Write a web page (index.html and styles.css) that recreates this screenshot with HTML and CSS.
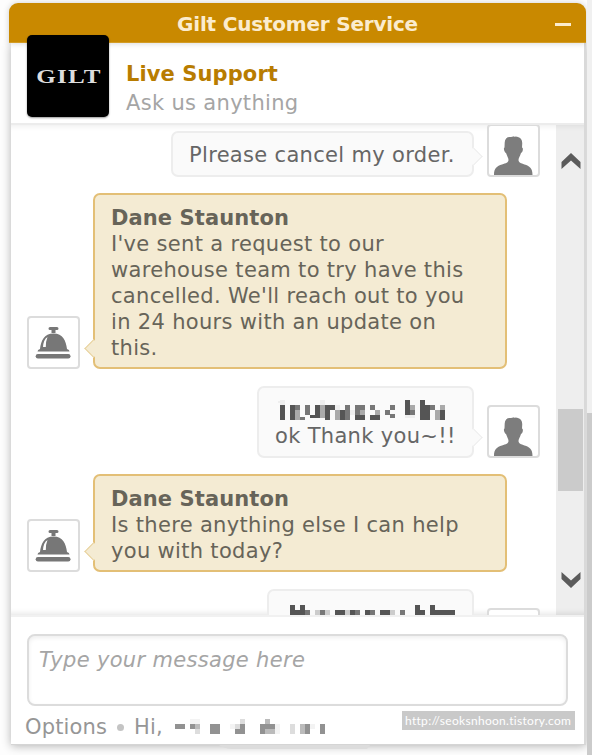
FILE: index.html
```
<!DOCTYPE html>
<html lang="en">

<head>
    <meta charset="UTF-8">
    <meta name="viewport" content="width=device-width, initial-scale=1.0">
    <title>Gilt Customer Service</title>
    <link rel="stylesheet" href="styles.css">
</head>

<body>

    <svg class="symbols">
        <symbol id="person" viewBox="0 0 49 49">
            <path d="M5 49c0-7 3-9 8-10.500c4-1.300 6.500-2 6.500-4.500c0-2-1.500-4-2.500-7c-1.500-.5-3-5-1.500-5.500l.2-5c.2-3.500 2-5.500 5-5.500c2-.2 3-.3 4.500-.8l.3.700l1-.4c5 .5 7 3 6.700 7.500l-.2 3.500c1.800.5.5 5-1 5.500c-1 3.500-2.500 5-2.500 7c0 2.500 2.500 3.200 6 4.500c5 1.500 8 3.500 8 10.500z" fill="#7d7d7d" />
        </symbol>
        <symbol id="bell" viewBox="0 0 49 49">
            <path d="M21 9h7q1.500 0 1.500 1.500t-1.500 1.500h-1.500v3h-4v-3h-1.500q-1.500 0-1.500-1.500t1.500-1.500z" fill="#777" />
            <path d="M8.500 33.500q0-2 2.500-2.500c1-8 4-15.500 13.500-15.500s12.500 7.500 13.500 15.500q2.500.5 2.500 2.500z" fill="#777" />
            <rect x="6.700" y="36" width="34.800" height="4.500" rx="2.200" fill="#777" />
            <path d="M14 29q.5-7.500 4.500-10q-1.700 4-1.700 10z" fill="#fff" />
        </symbol>
    </svg>

    <div class="chat">
        <div class="titleBar">
            <span class="title">Gilt Customer Service</span>
            <span class="minimize"></span>
        </div>
        <div class="panel">
            <div class="header">
                <div class="logo"><span>GILT</span></div>
                <div class="headerText">
                    <div class="headerTitle">Live Support</div>
                    <div class="headerSub">Ask us anything</div>
                </div>
            </div>

            <div class="messages">
                <div class="list">
                    <div class="row user">
                        <div class="bubble order">Plrease cancel my order.</div>
                        <div class="avatar"><svg><use href="#person" /></svg></div>
                    </div>
                    <div class="row agent">
                        <div class="avatar"><svg><use href="#bell" /></svg></div>
                        <div class="bubble">
                            <b>Dane Staunton</b><br>
                            I've sent a request to our<br>
                            warehouse team to try have this<br>
                            cancelled. We'll reach out to you<br>
                            in 24 hours with an update on<br>
                            this.
                        </div>
                    </div>
                    <div class="row user">
                        <div class="bubble thanks">
                            <svg class="hiddenName" width="180" height="26" shape-rendering="crispEdges">
                                <path d="M5 10h5v15h-5zM15 10h5v15h-5zM50 10h5v15h-5zM55 10h5v5h-5zM130 5h5v15h-5zM145 5h5v20h-5zM150 10h5v15h-5zM35 20h10v3h-10zM65 15h5v10h-5zM80 20h10v5h-10zM95 20h10v5h-10zM40 10h5v10h-5zM165 15h5v10h-5z" fill="#555" />
                                <path d="M20 10h5v5h-5zM30 10h5v10h-5zM70 10h5v15h-5zM80 10h10v10h-10zM95 10h5v5h-5zM110 15h5v5h-5zM115 10h5v5h-5zM115 19h5v4h-5zM135 15h5v5h-5zM155 10h5v5h-5zM25 22h5v3h-5z" fill="#777" />
                                <path d="M20 15h5v10h-5zM45 10h5v13h-5zM60 15h5v10h-5zM85 15h5v5h-5zM100 15h5v5h-5zM160 15h5v10h-5zM135 10h5v5h-5zM165 10h5v5h-5z" fill="#aaa" />
                                <path d="M3 6h2v2h-2zM60 10h5v5h-5zM75 15h5v5h-5zM130 20h10v3h-10zM5 5h5v5h-5zM45 5h5v5h-5z" fill="#eee" />
                            </svg>
                            ok Thank you~!!
                        </div>
                        <div class="avatar"><svg><use href="#person" /></svg></div>
                    </div>
                    <div class="row agent">
                        <div class="avatar"><svg><use href="#bell" /></svg></div>
                        <div class="bubble">
                            <b>Dane Staunton</b><br>
                            Is there anything else I can help<br>
                            you with today?
                        </div>
                    </div>
                    <div class="row user">
                        <div class="bubble last">
                            <svg class="hiddenName" width="180" height="26" shape-rendering="crispEdges">
                                <path d="M5 6h5v10h-5zM10 11h10v5h-10zM15 6h5v5h-5zM50 11h10v5h-10zM65 11h5v5h-5zM80 11h5v5h-5zM95 11h10v5h-10zM130 6h5v10h-5zM135 11h5v5h-5zM145 6h5v10h-5zM150 11h20v5h-20z" fill="#555" />
                                <path d="M20 11h5v5h-5zM35 11h5v5h-5zM70 11h5v5h-5zM85 11h5v5h-5zM115 11h5v5h-5z" fill="#777" />
                                <path d="M30 11h5v5h-5zM40 11h5v5h-5zM60 11h5v5h-5zM105 11h5v5h-5z" fill="#ccc" />
                            </svg>
                        </div>
                        <div class="avatar"></div>
                    </div>
                </div>
                <div class="scrollbar">
                    <svg width="20" height="17" viewBox="0 0 20 17"><path d="M0.500 17v-7l9.500-9l9.500 9v7l-9.500-8.500z" fill="#5b5b5b" /></svg>
                    <div class="thumb"></div>
                    <svg width="20" height="17" viewBox="0 0 20 17"><path d="M0.500 0v7l9.500 9l9.500-9v-7l-9.500 8.500z" fill="#5b5b5b" /></svg>
                </div>
            </div>

            <div class="footer">
                <div class="input">Type your message here</div>
                <div class="options">
                    <span>Options</span>
                    <span class="dot"></span>
                    <span>Hi,</span>
                    <svg class="hiddenUser" width="155" height="20" shape-rendering="crispEdges">
                        <path d="M0 5h10v5h-10zM35 5h10v10h-10zM65 5h5v10h-5zM60 10h5v5h-5zM85 5h5v10h-5zM90 5h10v5h-10zM130 5h5v10h-5zM145 5h5v10h-5zM15 5h5v5h-5z" fill="#929292" />
                        <path d="M20 5h5v5h-5zM90 0h5v5h-5zM90 10h10v5h-10zM125 5h5v10h-5z" fill="#bbb" />
                        <path d="M20 10h5v5h-5zM60 5h5v5h-5zM65 0h5v5h-5zM115 5h5v10h-5z" fill="#ddd" />
                        <path d="M15 0h10v5h-10zM55 5h5v5h-5zM100 5h5v10h-5zM135 5h5v5h-5z" fill="#f3f3f3" />
                    </svg>
                </div>
            </div>
        </div>
    </div>

    <svg class="smudge" width="155" height="7"><path d="M2 1h151l-3 4h-136q-8-1-12-4z" fill="#dcdcdc" /></svg>
    <div class="pageScroll"></div>
    <div class="watermark">http://seoksnhoon.tistory.com</div>

</body>

</html>
```
FILE: styles.css
```
* {
    box-sizing: border-box;
}

body {
    margin: 0;
    height: 755px;
    position: relative;
    overflow: hidden;
    background: #fdfdfd;
    font-family: "DejaVu Sans", Verdana, sans-serif;
    font-size: 21px;
    line-height: 26px;
    letter-spacing: 0.32px;
    color: #666;
}

b {
    letter-spacing: 0.1px;
}

.symbols {
    display: none;
}

.chat {
    width: 577px;
    height: 742px;
    margin: 3px 0 0 9px;
    display: inline-block;
}

.titleBar {
    height: 40px;
    display: flex;
    align-items: center;
    justify-content: center;
    position: relative;
    background: #c98900;
    border-bottom: 1px solid #d39c25;
    border-radius: 9px 9px 0 0;
    box-shadow: 0 0 6px rgba(0, 0, 0, 0.18);
}

.title {
    color: #fbecce;
    font-size: 20px;
    font-weight: bold;
    letter-spacing: -0.2px;
    padding-top: 2px;
}

.minimize {
    position: absolute;
    right: 15px;
    top: 20px;
    width: 16px;
    height: 3px;
    background: #fbecce;
}

.panel {
    height: 702px;
    margin-left: 2px;
    background: #fff;
    border-right: 2px solid #d9d9d9;
    border-bottom: 1px solid #d5d5d5;
    box-shadow: 0 1px 9px rgba(0, 0, 0, 0.3);
}

.header {
    height: 82px;
    display: flex;
    padding-left: 16px;
    border-bottom: 2px solid #ececec;
}

.logo {
    width: 82px;
    height: 82px;
    margin-top: -8px;
    position: relative;
    display: flex;
    align-items: center;
    justify-content: center;
    background: #000;
    border-radius: 5px;
    box-shadow: 0 1px 2px rgba(0, 0, 0, 0.4);
    color: #ddd;
    font: bold 19px "Liberation Serif", serif;
}

.logo span {
    transform: scaleX(1.32);
    letter-spacing: 1px;
    padding: 1px 0 0 1px;
}

.headerText {
    padding: 17px 0 0 17px;
    line-height: 29px;
}

.headerTitle {
    color: #b87c00;
    font-weight: bold;
    letter-spacing: 0.1px;
}

.headerSub {
    color: #a5a5a5;
}

.messages {
    height: 490px;
    display: flex;
    overflow: hidden;
    box-shadow: inset 0 7px 6px -6px rgba(0, 0, 0, 0.08), inset 0 -7px 6px -6px rgba(0, 0, 0, 0.12);
}

.list {
    width: 545px;
    padding: 0 16px;
}

.row {
    display: flex;
    align-items: flex-end;
    gap: 13px;
    margin-bottom: 16px;
}

.row.user {
    justify-content: flex-end;
}

.row.agent {
    margin-bottom: 17px;
}

.row:first-child {
    margin-top: -1px;
}

.avatar {
    width: 53px;
    height: 53px;
    flex: none;
    background: #fff;
    border: 2px solid #dcdcdc;
    border-radius: 4px;
}

.avatar svg {
    display: block;
    width: 49px;
    height: 49px;
}

.bubble {
    position: relative;
    padding: 9px 16px 7px;
    background: #fafafa;
    border: 2px solid #ededed;
    border-radius: 7px;
    white-space: nowrap;
}

.bubble::after {
    content: "";
    position: absolute;
    right: -8px;
    bottom: 12px;
    width: 12px;
    height: 12px;
    background: #fafafa;
    border: solid #ededed;
    border-width: 1px 1px 0 0;
    transform: rotate(45deg);
}

.agent .bubble {
    width: 414px;
    padding-top: 10px;
    padding-bottom: 6px;
    color: #676459;
    background: #f4ebd3;
    border-color: #e3bf76;
}

.agent .bubble::after {
    right: auto;
    left: -8px;
    background: #f4ebd3;
    border-color: #e8d19d;
    border-width: 0 0 1px 1px;
}

.order {
    width: 303px;
}

.thanks {
    width: 217px;
}

.last {
    width: 207px;
    height: 72px;
}

.user:last-child {
    align-items: flex-start;
}

.last + .avatar {
    margin-top: 19px;
}

.hiddenName {
    display: block;
    margin: -2px 0 0;
    height: 28px;
}

.last .hiddenName {
    margin-top: -1px;
}

.scrollbar {
    width: 28px;
    display: flex;
    flex-direction: column;
    align-items: center;
    padding: 27px 0 26px 1px;
    background: rgba(0, 0, 0, 0.065);
}

.thumb {
    width: 25px;
    height: 82px;
    margin-top: 240px;
    margin-bottom: auto;
    background: #cbcbcb;
}

.footer {
    height: 129px;
    padding: 17px 16px 0;
    border-top: 2px solid #f1f1f1;
}

.input {
    height: 72px;
    padding: 11px 9px 9px 10px;
    border: 2px solid #dcdcdc;
    border-radius: 8px;
    box-shadow: inset 0 2px 4px rgba(0, 0, 0, 0.07);
    color: #a5a5a5;
    font-style: italic;
}

.options {
    display: flex;
    align-items: center;
    margin: 8px 0 0 -2px;
    color: #969696;
    letter-spacing: 0.15px;
}

.dot {
    width: 7px;
    height: 7px;
    margin: 0 10px;
    border-radius: 50%;
    background: #c4c4c4;
}

.hiddenUser {
    margin: 3px 0 0 12px;
}

.smudge {
    position: absolute;
    left: 217px;
    top: 744px;
}

.pageScroll {
    position: absolute;
    top: 0;
    right: 0;
    width: 5px;
    height: 755px;
    background: linear-gradient(#f0f0f0 413px, #cbcbcb 413px);
}

.watermark {
    position: absolute;
    left: 402px;
    top: 711px;
    width: 173px;
    height: 19px;
    padding-left: 3px;
    background: #c9c9c9;
    color: #fff;
    font: 12px/19px Lato, sans-serif;
    letter-spacing: 0.3px;
}
```
